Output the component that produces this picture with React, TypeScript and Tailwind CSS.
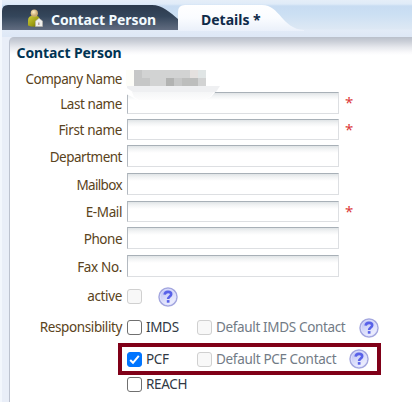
import clsx from "clsx";

interface Field {
  label: string;
  row: string;
  input: string;
  text: string;
  required?: boolean;
}

const fields: Field[] = [
  { label: "Last name", row: "h-[27px]", input: "h-[22px]", text: "top-[2px] tracking-[-0.42px]", required: true },
  { label: "First name", row: "h-[26px]", input: "h-[21px]", text: "top-[1px] tracking-[-0.35px]", required: true },
  { label: "Department", row: "h-[28px]", input: "h-[22px]", text: "top-[2px] tracking-[-0.5px]" },
  { label: "Mailbox", row: "h-[28px]", input: "h-[22px]", text: "top-[2px] tracking-[-0.65px]" },
  { label: "E-Mail", row: "h-[26px]", input: "h-[21px]", text: "top-[1px] tracking-[-0.4px]", required: true },
  { label: "Phone", row: "h-[28px]", input: "h-[22px]", text: "top-[2px] tracking-[-0.5px]" },
  { label: "Fax No.", row: "h-[28px]", input: "h-[22px]", text: "top-[2px] tracking-[-0.35px]" },
];

function PersonIcon() {
  return (
    <svg width="17" height="19" viewBox="0 0 17 19" className="shrink-0">
      <defs>
        <linearGradient id="body" x1="0" x2="1" y1="0" y2="1">
          <stop offset="0" stopColor="#d0cf3d" />
          <stop offset="0.6" stopColor="#9c9c12" />
          <stop offset="1" stopColor="#5e6010" />
        </linearGradient>
        <radialGradient id="head" cx="0.4" cy="0.35">
          <stop offset="0" stopColor="#fff0c8" />
          <stop offset="1" stopColor="#c9a873" />
        </radialGradient>
      </defs>
      <path d="M1 16.5V11.5Q1 6.5 7 6.5Q13 6.5 13 11.5V16.5Q7 19 1 16.5Z" fill="url(#body)" />
      <circle cx="7.3" cy="4.2" r="3.6" fill="url(#head)" />
      <path d="M8.5 17.5V12L12 9.3L15.5 12V17.5Z" fill="#f0efec" stroke="#b9b5ae" strokeWidth="0.6" />
      <path d="M11.8 13.5v2.5" stroke="#b08f8b" strokeWidth="1.2" />
    </svg>
  );
}

function HelpIcon({ className }: { className?: string }) {
  return (
    <svg width="20" height="20" viewBox="0 0 20 20" className={clsx("shrink-0", className)}>
      <defs>
        <linearGradient id="help" x1="0" x2="0.6" y1="0" y2="1">
          <stop offset="0" stopColor="#b4b9f3" />
          <stop offset="1" stopColor="#f2f3ff" />
        </linearGradient>
      </defs>
      <circle cx="10" cy="10" r="9" fill="url(#help)" stroke="#a4a7df" strokeWidth="1.5" />
      <circle cx="10" cy="10" r="7.8" fill="none" stroke="#e0e2fc" strokeWidth="0.8" />
      <path
        d="M6.6 7.6C6.9 5.6 8.2 4.9 10 4.9C12 4.9 13.2 5.8 13.2 7.3C13.2 9.5 10.1 9.4 10.1 12"
        fill="none"
        stroke="#5861e8"
        strokeWidth="2.6"
      />
      <rect x="8.8" y="13.1" width="2.7" height="2.6" fill="#5861e8" />
    </svg>
  );
}

function Checkbox({ checked, disabled }: { checked?: boolean; disabled?: boolean }) {
  return (
    <span
      className={clsx(
        "flex h-[15px] w-[15px] shrink-0 items-center justify-center rounded-[3px] border",
        checked && "border-[#0075ff] bg-[#0075ff]",
        !checked && disabled && "border-[#d0d0d0] bg-[#f8f8f8]",
        !checked && !disabled && "border-[#707070] bg-white",
      )}
    >
      {checked && (
        <svg width="13" height="13" viewBox="0 0 13 13" className="shrink-0">
          <path d="M2.2 7L5 9.8L10.8 2.8" fill="none" stroke="white" strokeWidth="2" />
        </svg>
      )}
    </span>
  );
}

// pixelated company value with its paper edge over the first input
function CompanyValue() {
  return (
    <svg width="98" height="36" viewBox="0 0 98 36" className="absolute top-[66px] left-[121px] z-10">
      <defs>
        <linearGradient id="paper" x1="0" x2="0" y1="0" y2="1">
          <stop offset="0" stopColor="#f5f6f7" />
          <stop offset="1" stopColor="#fdfdfd" />
        </linearGradient>
      </defs>
      <path d="M3 4H94V24L88 31L80 34H14L9 31L3 28Z" fill="white" />
      <path d="M9 26H91L87 31L80 34H16L11 31Z" fill="url(#paper)" />
      <path d="M4 20H97L93 26H10L4 22Z" fill="#eff0f2" />
      <rect x="3" y="4" width="8" height="16" fill="#fdfdf8" />
      <rect x="11" y="4" width="72" height="16" fill="#d2d3d3" />
      <path d="M11 4h8v8h-8zM11 12h16v8h-16zM51 12h8v8h-8z" fill="#c6c7c7" />
      <path d="M43 12h8v8h-8z" fill="#b2b3b2" />
      <path d="M59 12h16v8h-16z" fill="#bdbebd" />
      <path d="M67 4h8v8h-8z" fill="#e5e1df" />
      <path d="M75 4h8v8h-8z" fill="#e0e5e5" />
    </svg>
  );
}

export default function App() {
  return (
    <div className="relative flex h-[402px] w-[412px] flex-col overflow-hidden border-l-2 border-[#f3f7fd] bg-[#e9eef8] font-['Noto_Sans','Open_Sans',sans-serif] text-[13.5px] leading-[20px] text-[#5a4320]">
      <header className="h-[37px] shrink-0 bg-[linear-gradient(#e5eef8_0px,#dfebf8_4px,#c8dcf2_6px,#cbdff3_14px,#dde8f4_29px,#e2ebf7_30px,#dee8f6_36px)] pt-[5px] text-[14px]">
        <div className="flex h-[25px]">
          <div className="relative flex w-[176px] items-center">
            <svg width="200" height="25" viewBox="0 0 200 25" className="absolute top-0 left-0">
              <defs>
                <linearGradient id="dark" x1="0" x2="0" y1="0" y2="1">
                  <stop offset="0" stopColor="#2c3a4c" />
                  <stop offset="0.45" stopColor="#34465b" />
                  <stop offset="1" stopColor="#616c80" />
                </linearGradient>
              </defs>
              <path d="M0 25V6Q0 0 6 0H150C160 0 169 8 176 14V25Z" fill="url(#dark)" />
            </svg>
            <span className="relative top-[1px] ml-[25px]">
              <PersonIcon />
            </span>
            <span className="relative top-[2px] ml-[7px] font-bold tracking-[-0.1px] whitespace-nowrap text-[#f2fbff]">
              Contact Person
            </span>
          </div>
          <div className="relative w-[130px]">
            <svg width="130" height="26" viewBox="0 0 130 26" className="absolute top-0 left-0">
              <defs>
                <linearGradient id="light" x1="0" x2="0" y1="0" y2="1">
                  <stop offset="0" stopColor="#ffffff" />
                  <stop offset="0.5" stopColor="#fafcff" />
                  <stop offset="1" stopColor="#eaf0fa" />
                </linearGradient>
              </defs>
              <path d="M0 26V7Q0 0 7 0H84C102 0 104 24 126 25V26Z" fill="url(#light)" />
            </svg>
            <span className="relative top-[5px] left-[23px] font-bold whitespace-nowrap text-[#0f2a49]">
              Details *
            </span>
          </div>
        </div>
      </header>

      <main className="ml-[7px] flex grow flex-col rounded-tl-[5px] border-l border-[#bcc2cf] bg-[linear-gradient(#b9bfcb_0px,#cdd1d9_5px,#e5e7ec_10px,#f8f8fa_15px,#ffffff_18px)] pt-[6px]">
        <h1 className="ml-[6.5px] h-[26px] text-[14px] font-bold tracking-[-0.1px] text-[#003453]">Contact Person</h1>
        <div className="flex h-[23px]">
          <span className="w-[112px] text-right tracking-[-0.45px] whitespace-nowrap">Company Name</span>
        </div>

        {fields.map((f) => (
          <div key={f.label} className={clsx("flex shrink-0", f.row)}>
            <span className={clsx("relative w-[112px] text-right whitespace-nowrap", f.text)}>{f.label}</span>
            <input
              className={clsx(
                "ml-[5px] w-[212px] border border-t-[#a8b0b7] border-r-[#dddfe2] border-b-[#dddfe2] border-l-[#b3b9c0] bg-[linear-gradient(#e0e4e6_0px,#f1f3f4_3px,#ffffff_7px)] outline-none",
                f.input,
              )}
            />
            {f.required && <span className="ml-[6px] text-[15px] leading-[21px] text-[#dc3a3a]">*</span>}
          </div>
        ))}

        <div className="flex h-[26px] shrink-0 items-center">
          <span className="w-[112px] text-right tracking-[-0.35px]">active</span>
          <span className="ml-[5px]"><Checkbox disabled /></span>
          <HelpIcon className="relative top-[1px] ml-[16px]" />
        </div>
        <div className="flex h-[34px] shrink-0 items-center pt-[2px]">
          <span className="w-[112px] text-right tracking-[-0.4px]">Responsibility</span>
          <span className="ml-[5px]"><Checkbox /></span>
          <span className="ml-[4px] w-[51px] tracking-[-0.35px] text-[#303844]">IMDS</span>
          <Checkbox disabled />
          <span className="ml-[4px] w-[143px] tracking-[-0.35px] whitespace-nowrap text-[#727b86]">Default IMDS Contact</span>
          <HelpIcon className="relative top-[1px]" />
        </div>
        <div className="ml-[108px] flex h-[32px] w-[263px] shrink-0 items-center border-4 border-[#800018] pl-[5px]">
          <Checkbox checked />
          <span className="ml-[4px] w-[51px] tracking-[-0.35px] text-[#303844]">PCF</span>
          <Checkbox disabled />
          <span className="ml-[4px] w-[133px] tracking-[-0.3px] whitespace-nowrap text-[#727b86]">Default PCF Contact</span>
          <HelpIcon />
        </div>
        <div className="ml-[117px] flex h-[18px] shrink-0 items-center">
          <Checkbox />
          <span className="ml-[4px] tracking-[-0.3px] text-[#303844]">REACH</span>
        </div>
      </main>
      <CompanyValue />
    </div>
  );
}
